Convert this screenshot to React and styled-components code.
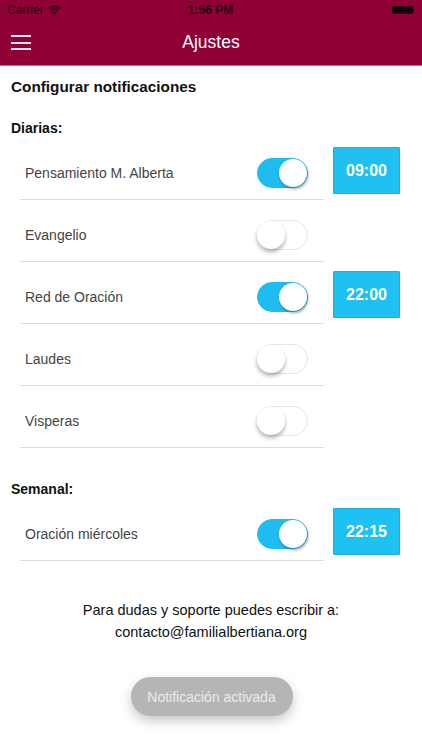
import styled, {createGlobalStyle} from 'styled-components'

const GlobalStyle = createGlobalStyle`
  body {
    margin: 0;
    background: #ffffff;
    font-family: "Liberation Sans", Arial, sans-serif;
  }
`

const Screen = styled.div`
  width: 422px;
  height: 750px;
  overflow: hidden;
  background: #ffffff;
`

const Header = styled.header`
  background: #8f0034;
  border-bottom: 1px solid #c9667f;
`

const StatusBar = styled.div`
  height: 20px;
  display: grid;
  grid-template-columns: 1fr auto 1fr;
  align-items: center;
  padding: 0 8px 0 7px;
  font-size: 12px;
  color: #2a0010;
`

const Carrier = styled.div`
  display: flex;
  align-items: center;
  gap: 4px;
`

const Clock = styled.div`
  font-weight: bold;
`

const Battery = styled.div`
  justify-self: end;
  display: flex;
  align-items: center;

  &::before {
    content: '';
    width: 21px;
    height: 8px;
    background: #1a0008;
    border-radius: 1.5px;
  }
  &::after {
    content: '';
    width: 1.5px;
    height: 3px;
    background: #1a0008;
  }
`

const NavBar = styled.div`
  height: 45px;
  display: grid;
  grid-template-columns: 60px 1fr 60px;
  align-items: center;
`

const Burger = styled.div`
  margin-left: 11px;
  width: 20px;
  display: flex;
  flex-direction: column;
  gap: 4.5px;

  span {
    height: 2px;
    background: #fbe6eb;
  }
`

const NavTitle = styled.h1`
  margin: 0;
  text-align: center;
  color: #ffffff;
  font-size: 17.5px;
  font-weight: 500;
  padding-bottom: 1px;
`

const Content = styled.main`
  padding-left: 11px;
`

const PageTitle = styled.h2`
  margin: 11px 0 0;
  font-size: 15.3px;
  line-height: 20px;
  font-weight: bold;
  color: #111;
`

const Section = styled.h3`
  margin: ${p => p.$top}px 0 0;
  font-size: 14px;
  line-height: 20px;
  font-weight: bold;
  color: #111;
`

const Row = styled.div`
  display: flex;
  align-items: flex-start;
  margin-left: 9px;
`

const Item = styled.div`
  width: 304px;
  height: 52px;
  padding-top: 9px;
  border-bottom: 1px solid #dddddd;
  display: flex;
  align-items: center;
  justify-content: space-between;
  box-sizing: content-box;
`

const Label = styled.span`
  padding-left: 5px;
  font-size: 14px;
  color: #444;
`

const Switch = styled.div`
  position: relative;
  width: 51px;
  height: 30px;
  margin-right: 16px;
  border-radius: 16px;
  box-sizing: border-box;
  background: ${p => (p.$on ? '#1fbcef' : '#ffffff')};
  border: 1.5px solid ${p => (p.$on ? '#1fbcef' : '#e6e6e6')};

  &::after {
    content: '';
    position: absolute;
    top: -0.5px;
    left: ${p => (p.$on ? '21px' : '-1px')};
    width: 28px;
    height: 28px;
    border-radius: 50%;
    background: #ffffff;
    box-shadow: ${p =>
      p.$on
        ? '1px 2px 3px rgba(0, 60, 90, 0.45)'
        : '0 3px 4px rgba(0, 0, 0, 0.3)'};
  }
`

const TimeSlot = styled.div`
  width: 67px;
  height: 47px;
  margin: 9px 0 0 9px;
  box-sizing: border-box;
  background: #1fc0f2;
  border: 1px solid #1ab0e0;
  border-radius: 1px;
  display: flex;
  align-items: center;
  justify-content: center;
  color: #ffffff;
  font-size: 16px;
  font-weight: bold;
`

const Support = styled.p`
  margin: 38px 0 0 -11px;
  text-align: center;
  font-size: 14.5px;
  line-height: 22px;
  color: #111;
`

const Toast = styled.div`
  width: 162px;
  height: 39px;
  margin: 34px auto 0;
  transform: translateX(-5px);
  border-radius: 20px;
  background: #b5b5b5;
  color: #ececec;
  font-size: 14px;
  display: flex;
  align-items: center;
  justify-content: center;
  box-shadow: 0 5px 12px rgba(0, 0, 0, 0.22);
`

const WifiIcon = () => (
  <svg width="13" height="10" viewBox="0 0 13 10">
    <path d="M6.5 10 L4.3 7.4 A3.2 3.2 0 0 1 8.7 7.4 Z" fill="#2a0010" />
    <path d="M2.8 5.7 A5.4 5.4 0 0 1 10.2 5.7" stroke="#2a0010" strokeWidth="1.6" fill="none" />
    <path d="M0.9 3.6 A8.2 8.2 0 0 1 12.1 3.6" stroke="#2a0010" strokeWidth="1.6" fill="none" />
  </svg>
)

const daily = [
  {label: 'Pensamiento M. Alberta', on: true, time: '09:00'},
  {label: 'Evangelio', on: false},
  {label: 'Red de Oración', on: true, time: '22:00'},
  {label: 'Laudes', on: false},
  {label: 'Visperas', on: false},
]

const weekly = [{label: 'Oración miércoles', on: true, time: '22:15'}]

function SettingRow({label, on, time}) {
  return (
    <Row>
      <Item>
        <Label>{label}</Label>
        <Switch $on={on} />
      </Item>
      {time && <TimeSlot>{time}</TimeSlot>}
    </Row>
  )
}

function App() {
  return (
    <Screen>
      <GlobalStyle />
      <Header>
        <StatusBar>
          <Carrier>
            Carrier <WifiIcon />
          </Carrier>
          <Clock>1:56 PM</Clock>
          <Battery />
        </StatusBar>
        <NavBar>
          <Burger>
            <span />
            <span />
            <span />
          </Burger>
          <NavTitle>Ajustes</NavTitle>
        </NavBar>
      </Header>
      <Content>
        <PageTitle>Configurar notificaciones</PageTitle>
        <Section $top={21}>Diarias:</Section>
        {daily.map(r => (
          <SettingRow key={r.label} {...r} />
        ))}
        <Section $top={31}>Semanal:</Section>
        {weekly.map(r => (
          <SettingRow key={r.label} {...r} />
        ))}
        <Support>
          Para dudas y soporte puedes escribir a:
          <br />
          contacto@familialbertiana.org
        </Support>
        <Toast>Notificación activada</Toast>
      </Content>
    </Screen>
  )
}

export default App
